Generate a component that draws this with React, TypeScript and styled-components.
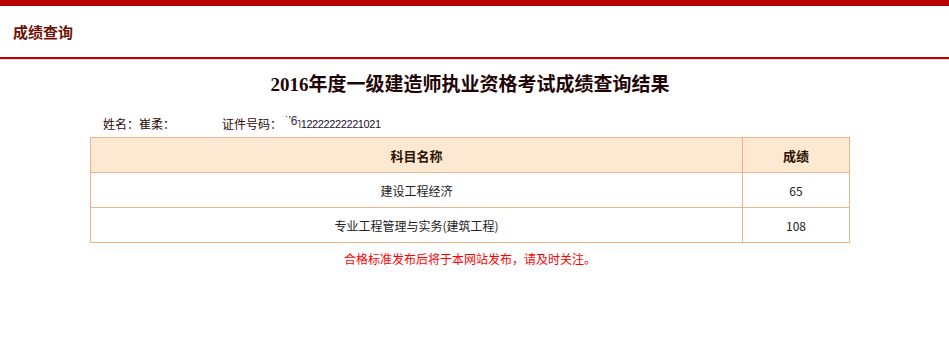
import React from "react";
import styled, { createGlobalStyle } from "styled-components";

const Global = createGlobalStyle`
  html, body { margin: 0; padding: 0; background: #ffffff; }
  body { font-family: "Noto Sans CJK SC", sans-serif; }
`;

const Page = styled.div`
  width: 949px;
  min-height: 357px;
  background: #fff;
`;

const TopBar = styled.header`
  height: 50px;
  border-top: 6px solid #b80000;
  border-bottom: 2px solid #b80000;
  box-shadow: 0 1px 0 #f4dcd2;
  display: flex;
  align-items: center;
  padding-left: 13px;
  padding-top: 1px;
  box-sizing: content-box;
`;

const PageTitle = styled.h1`
  margin: 0;
  font-size: 15px;
  line-height: 20px;
  font-weight: 700;
  color: #6e1206;
  letter-spacing: 0;
`;

const Main = styled.main`
  width: 940px;
  padding-top: 13px;
`;

const ResultTitle = styled.h2`
  margin: 0;
  height: 26px;
  font-family: "Liberation Serif", "Noto Sans CJK SC", serif;
  font-size: 19px;
  line-height: 26px;
  font-weight: 700;
  text-align: center;
  color: #1f0505;
`;

const InfoRow = styled.div`
  margin-top: 17px;
  height: 18px;
  padding-left: 103px;
  display: flex;
  align-items: center;
  font-size: 12px;
  line-height: 18px;
  color: #2a0a05;
`;

const InfoItem = styled.span<{ $w?: number }>`
  display: inline-flex;
  align-items: center;
  width: ${(p) => (p.$w ? `${p.$w}px` : "auto")};
`;

const Scribble = styled.span`
  font-family: "Liberation Sans", sans-serif;
  font-size: 12px;
  color: #3a2a40;
  letter-spacing: -0.5px;
  position: relative;
  top: -3px;
  margin-left: 3px;
`;

const IdNumber = styled.span`
  font-family: "Liberation Sans", sans-serif;
  font-size: 11px;
  letter-spacing: -0.4px;
  color: #1a1030;
`;

const Table = styled.table`
  margin: 4px auto 0;
  width: 760px;
  border-collapse: collapse;
  border: 1px solid #efb38a;
`;

const HeadCell = styled.th<{ $w?: number }>`
  height: 34px;
  padding: 0;
  border: 1px solid #efb38a;
  background: #fde9d1;
  font-size: 13px;
  font-weight: 700;
  color: #2e1205;
  text-align: center;
  width: ${(p) => (p.$w ? `${p.$w}px` : "auto")};
`;

const Cell = styled.td`
  height: 34px;
  padding: 0;
  border: 1px solid #efb38a;
  font-size: 12px;
  color: #222;
  text-align: center;
`;

const Notice = styled.p`
  margin: 6px 0 0;
  font-size: 12px;
  line-height: 20px;
  text-align: center;
  color: #ff0000;
`;

const rows = [
  { subject: "建设工程经济", score: "65" },
  { subject: "专业工程管理与实务(建筑工程)", score: "108" },
];

export default function App() {
  return (
    <Page>
      <Global />
      <TopBar>
        <PageTitle>成绩查询</PageTitle>
      </TopBar>
      <Main>
        <ResultTitle>2016年度一级建造师执业资格考试成绩查询结果</ResultTitle>
        <InfoRow>
          <InfoItem $w={119}>姓名：崔柔：</InfoItem>
          <InfoItem>
            证件号码：
            <Scribble>˙ʼ6</Scribble>
            <IdNumber>˥12222222221021</IdNumber>
          </InfoItem>
        </InfoRow>
        <Table>
          <thead>
            <tr>
              <HeadCell>科目名称</HeadCell>
              <HeadCell $w={106}>成绩</HeadCell>
            </tr>
          </thead>
          <tbody>
            {rows.map((r) => (
              <tr key={r.subject}>
                <Cell>{r.subject}</Cell>
                <Cell>{r.score}</Cell>
              </tr>
            ))}
          </tbody>
        </Table>
        <Notice>合格标准发布后将于本网站发布，请及时关注。</Notice>
      </Main>
    </Page>
  );
}
